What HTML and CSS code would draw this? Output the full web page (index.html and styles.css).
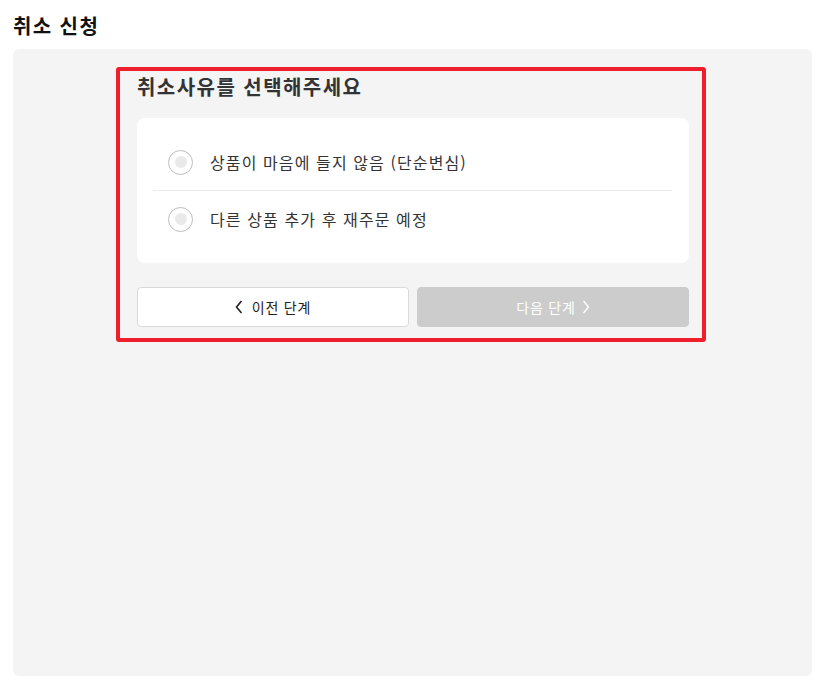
FILE: index.html
```html
<!DOCTYPE html>
<html lang="ko">
<head>
<meta charset="utf-8">
<title>취소 신청</title>
<link rel="stylesheet" href="styles.css">
</head>
<body>
<div class="page">
  <h1 class="page-title">취소 신청</h1>
  <div class="panel">
    <div class="focus-box">
      <h2 class="section-title">취소사유를 선택해주세요</h2>
      <div class="card">
        <label class="option">
          <span class="radio"><span class="radio-dot"></span></span>
          <span class="option-text">상품이 마음에 들지 않음 (단순변심)</span>
        </label>
        <div class="divider"></div>
        <label class="option">
          <span class="radio"><span class="radio-dot"></span></span>
          <span class="option-text">다른 상품 추가 후 재주문 예정</span>
        </label>
      </div>
      <div class="actions">
        <button class="btn btn-prev" type="button">
          <svg class="chev" width="8" height="14" viewBox="0 0 8 14"><path d="M6.5 1 L1.5 7 L6.5 13" fill="none" stroke="#222" stroke-width="1.6"/></svg>
          <span>이전 단계</span>
        </button>
        <button class="btn btn-next" type="button">
          <span>다음 단계</span>
          <svg class="chev" width="8" height="14" viewBox="0 0 8 14"><path d="M1.5 1 L6.5 7 L1.5 13" fill="none" stroke="#fff" stroke-width="1.4"/></svg>
        </button>
      </div>
    </div>
  </div>
</div>
</body>
</html>
```
FILE: styles.css
```css
* { box-sizing: border-box; }
html, body { margin: 0; padding: 0; background: #fff; }
body {
  font-family: "Noto Sans CJK KR", "Noto Sans", "Liberation Sans", sans-serif;
  color: #333;
}
.page {
  padding: 0 8px 6px 13px;
  height: 682px;
  display: flex;
  flex-direction: column;
}
.page-title {
  margin: 0;
  padding-top: 14px;
  height: 49px;
  font-size: 20px;
  line-height: 24px;
  font-weight: 700;
  color: #111;
  letter-spacing: 1.4px;
}
.panel {
  flex: 1;
  background: #f4f4f4;
  border-radius: 6px;
  padding-top: 18px;
}
.focus-box {
  width: 590px;
  margin: 0 auto 0 103px;
  border: 4px solid #ee1f2b;
  border-radius: 3px;
  padding: 0 13px 11px 17px;
}
.section-title {
  margin: 0;
  padding-top: 2px;
  height: 30px;
  font-size: 20px;
  line-height: 28px;
  font-weight: 700;
  color: #333;
  letter-spacing: 1.45px;
}
.card {
  margin-top: 17px;
  background: #fff;
  border-radius: 8px;
  padding: 16px 17px 16px 16px;
}
.option {
  height: 56px;
  display: flex;
  align-items: center;
  padding-left: 15px;
  cursor: pointer;
}
.radio {
  width: 25px;
  height: 25px;
  border: 1px solid #bdbdbd;
  border-radius: 50%;
  display: flex;
  align-items: center;
  justify-content: center;
  flex: none;
}
.radio-dot {
  width: 12px;
  height: 12px;
  border-radius: 50%;
  background: #e9e9e9;
}
.option-text {
  margin-left: 17px;
  font-size: 16px;
  line-height: 20px;
  color: #333;
  letter-spacing: 1.1px;
}
.divider {
  height: 1px;
  background: #ececec;
}
.actions {
  margin-top: 24px;
  display: flex;
  gap: 8px;
}
.btn {
  flex: 1;
  height: 40px;
  border-radius: 4px;
  font-family: inherit;
  font-size: 14px;
  letter-spacing: 0.8px;
  display: flex;
  align-items: center;
  justify-content: center;
  gap: 9px;
  padding: 0;
}
.btn-prev {
  background: #fff;
  border: 1px solid #dadada;
  color: #222;
}
.btn-next {
  background: #cccccc;
  border: 1px solid #cccccc;
  color: #fff;
  gap: 6px;
}
.chev { display: block; }
```
